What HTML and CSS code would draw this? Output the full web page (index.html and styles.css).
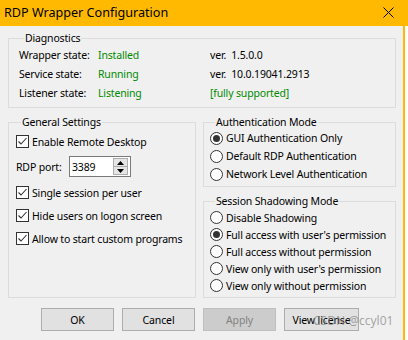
FILE: index.html
```html
<!DOCTYPE html>
<html>
<head>
<meta charset="utf-8">
<link rel="stylesheet" href="styles.css">
</head>
<body>
<div class="titlebar">
  <span class="title">RDP Wrapper Configuration</span>
  <svg class="close" width="11" height="11" viewBox="0 0 11 11"><path d="M0.5 0.5 L10.5 10.5 M10.5 0.5 L0.5 10.5" stroke="#000" stroke-width="1" fill="none"/></svg>
</div>
<div class="frame">
  <div class="client">
    <fieldset class="group diag">
      <legend>Diagnostics</legend>
      <div class="diag-grid">
        <span>Wrapper state:</span><span class="ok">Installed</span><span class="pre">ver.  1.5.0.0</span>
        <span>Service state:</span><span class="ok">Running</span><span class="pre">ver.  10.0.19041.2913</span>
        <span>Listener state:</span><span class="ok">Listening</span><span class="ok">[fully supported]</span>
      </div>
    </fieldset>

    <div class="columns">
      <fieldset class="group general">
        <legend>General Settings</legend>
        <div class="check first"><span class="cb"><svg width="13" height="13" viewBox="0 0 13 13"><rect x="0.5" y="0.5" width="12" height="12" fill="#fff" stroke="#333"/><path d="M2.5 6.5 L5 9 L10.5 3" fill="none" stroke="#333" stroke-width="1.1"/></svg></span><span>Enable Remote Desktop</span></div>
        <div class="port">
          <span class="port-label">RDP port:</span>
          <div class="edit">
            <span class="edit-text">3389</span>
            <span class="spin">
              <span class="spin-btn"><svg width="7" height="4" viewBox="0 0 7 4"><path d="M0 4 L3.5 0 L7 4 Z" fill="#000"/></svg></span>
              <span class="spin-btn"><svg width="7" height="4" viewBox="0 0 7 4"><path d="M0 0 L7 0 L3.5 4 Z" fill="#000"/></svg></span>
            </span>
          </div>
        </div>
        <div class="check gap"><span class="cb"><svg width="13" height="13" viewBox="0 0 13 13"><rect x="0.5" y="0.5" width="12" height="12" fill="#fff" stroke="#333"/><path d="M2.5 6.5 L5 9 L10.5 3" fill="none" stroke="#333" stroke-width="1.1"/></svg></span><span>Single session per user</span></div>
        <div class="check"><span class="cb"><svg width="13" height="13" viewBox="0 0 13 13"><rect x="0.5" y="0.5" width="12" height="12" fill="#fff" stroke="#333"/><path d="M2.5 6.5 L5 9 L10.5 3" fill="none" stroke="#333" stroke-width="1.1"/></svg></span><span>Hide users on logon screen</span></div>
        <div class="check"><span class="cb"><svg width="13" height="13" viewBox="0 0 13 13"><rect x="0.5" y="0.5" width="12" height="12" fill="#fff" stroke="#333"/><path d="M2.5 6.5 L5 9 L10.5 3" fill="none" stroke="#333" stroke-width="1.1"/></svg></span><span>Allow to start custom programs</span></div>
      </fieldset>

      <div class="rightcol">
        <fieldset class="group auth">
          <legend>Authentication Mode</legend>
          <div class="radios auth-list">
            <div class="radio"><span class="rb on"></span><span>GUI Authentication Only</span></div>
            <div class="radio"><span class="rb"></span><span>Default RDP Authentication</span></div>
            <div class="radio"><span class="rb"></span><span>Network Level Authentication</span></div>
          </div>
        </fieldset>
        <fieldset class="group shadow">
          <legend>Session Shadowing Mode</legend>
          <div class="radios shadow-list">
            <div class="radio"><span class="rb"></span><span>Disable Shadowing</span></div>
            <div class="radio"><span class="rb on"></span><span>Full access with user's permission</span></div>
            <div class="radio"><span class="rb"></span><span>Full access without permission</span></div>
            <div class="radio"><span class="rb"></span><span>View only with user's permission</span></div>
            <div class="radio"><span class="rb"></span><span>View only without permission</span></div>
          </div>
        </fieldset>
      </div>
    </div>

    <div class="buttons">
      <button class="btn">OK</button>
      <button class="btn">Cancel</button>
      <button class="btn disabled">Apply</button>
      <button class="btn wide">View license</button>
    </div>
  </div>
</div>
<div class="watermark">CSDN @ccyl01</div>
</body>
</html>
```

FILE: styles.css
```css
* { box-sizing: border-box; }
html, body {
  margin: 0;
  padding: 0;
  background: #ffffff;
  width: 408px;
  height: 340px;
  overflow: hidden;
  font-family: "Noto Sans", "Open Sans", sans-serif;
  font-size: 10.5px;
  letter-spacing: -0.16px;
  color: #000;
}
body { position: relative; }

.titlebar {
  height: 26px;
  background: #ffb900;
  display: flex;
  align-items: center;
  padding-left: 4px;
  padding-right: 14px;
}
.title {
  font-size: 12.6px;
  letter-spacing: 0;
  flex: 1;
  line-height: 26px;
}
.close { display: block; margin-top: -1px; }

.frame {
  display: flex;
  height: 314px;
}
.client {
  width: 405px;
  height: 314px;
  background: #f0f0f0;
  border-right: 2px solid #ffb900;
  padding: 4px 7px 0 8px;
}

.group {
  margin: 0;
  padding: 0;
  border: 1px solid #dcdcdc;
  min-width: 0;
}
.group legend {
  margin-left: 5px;
  padding: 0 1px;
  line-height: 16px;
  font-size: 10.5px;
}

.diag { padding: 0 10px 4px 10px; }
.diag-grid {
  display: grid;
  grid-template-columns: 79px 112px auto;
  line-height: 19px;
}
.ok { color: #008a00; }
.pre { white-space: pre; }

.columns {
  display: grid;
  grid-template-columns: 188px 193px;
  column-gap: 7px;
  margin-top: 6px;
  height: 184px;
}

.general { padding: 0 0 0 7px; }
.check {
  height: 23px;
  display: flex;
  align-items: center;
  gap: 3px;
}
.check.gap { margin-top: 4px; }
.cb { display: flex; width: 13px; height: 13px; }

.port {
  display: flex;
  align-items: center;
  margin-top: 3px;
  height: 21px;
}
.port-label { width: 53px; }
.edit {
  width: 62px;
  height: 21px;
  background: #fff;
  border: 1px solid #7a7a7a;
  display: flex;
  align-items: center;
  padding: 0 2px 0 2px;
}
.edit-text { flex: 1; }
.spin {
  display: flex;
  flex-direction: column;
  width: 15px;
  height: 17px;
}
.spin-btn {
  flex: 1;
  display: flex;
  align-items: center;
  justify-content: center;
  background: #e5e5e5;
  border: 1px solid #adadad;
}
.spin-btn + .spin-btn { border-top: none; }
.spin-btn svg { display: block; }

.rightcol {
  display: flex;
  flex-direction: column;
}
.auth { padding: 0 0 3px 6px; }
.auth-list { margin-top: -1px; }
.auth .radio { height: 18px; }
.shadow { padding: 0 0 3px 6px; margin-top: 6px; flex: 1; }
.shadow .radio { height: 17px; }
.radio {
  display: flex;
  align-items: center;
  gap: 3px;
  white-space: nowrap;
}
.rb {
  flex: none;
  width: 13px;
  height: 13px;
  border-radius: 50%;
  border: 1px solid #333;
  background: #fff;
  display: inline-flex;
  align-items: center;
  justify-content: center;
}
.rb.on::before {
  content: "";
  width: 7px;
  height: 7px;
  border-radius: 50%;
  background: #333;
}

.buttons {
  display: flex;
  gap: 8px;
  margin-top: 10px;
  padding-left: 33px;
}
.btn {
  width: 73px;
  height: 23px;
  background: #e1e1e1;
  border: 1px solid #adadad;
  font-family: "Noto Sans", "Open Sans", sans-serif;
  font-size: 10.5px;
  letter-spacing: -0.12px;
  color: #000;
  padding: 0;
}
.btn.wide { width: 75px; }
.btn.disabled {
  background: #cccccc;
  border-color: #bfbfbf;
  color: #838383;
}

.watermark {
  position: absolute;
  left: 313px;
  top: 312px;
  font-size: 12px;
  letter-spacing: 0;
  color: rgba(120, 120, 120, 0.65);
  white-space: nowrap;
}
```
